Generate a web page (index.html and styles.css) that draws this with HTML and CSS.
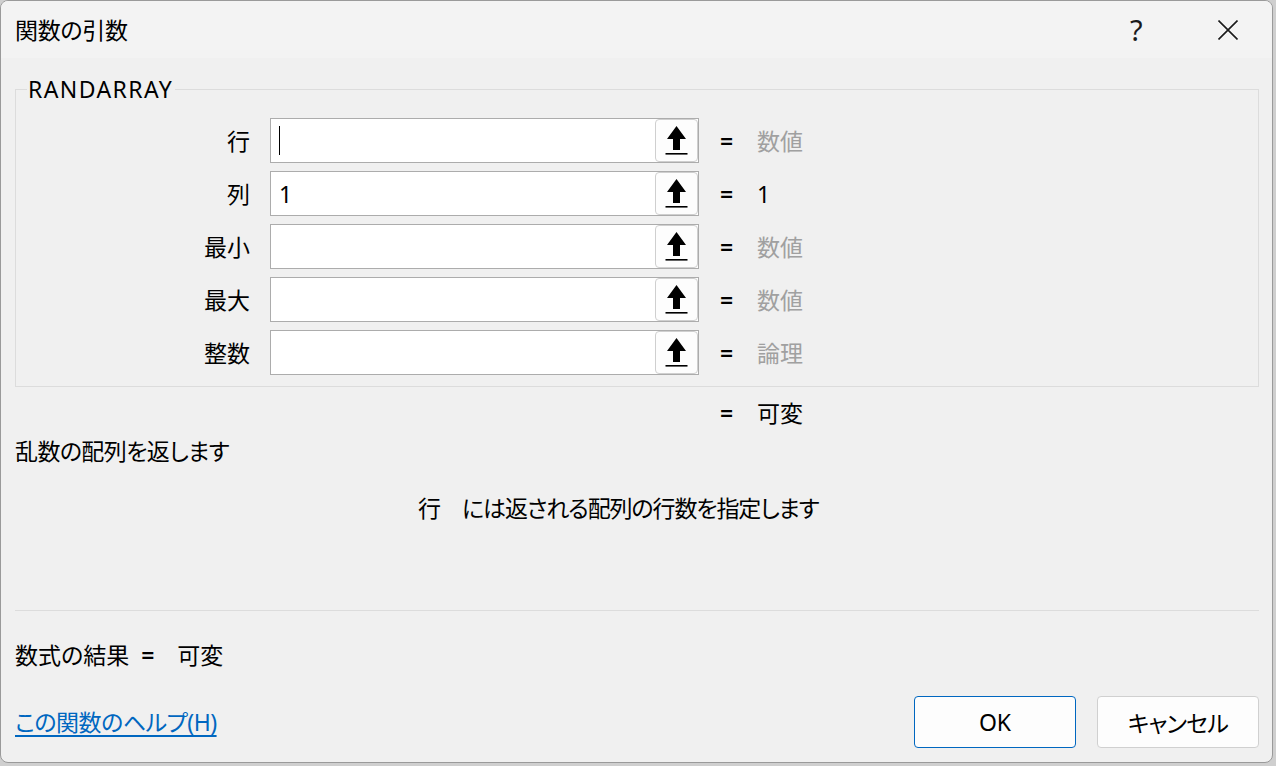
FILE: index.html
```html
<!DOCTYPE html>
<html lang="ja">
<head>
<meta charset="utf-8">
<link rel="stylesheet" href="styles.css">
</head>
<body>
<div class="dialog">
  <div class="titlebar">
    <div class="title">関数の引数</div>
    <div class="tb-actions">
      <span class="help">?</span>
      <svg class="close" width="20" height="20" viewBox="0 0 20 20"><path d="M0.5 0.5 L19.5 19.5 M19.5 0.5 L0.5 19.5" stroke="#1a1a1a" stroke-width="1.6" fill="none"/></svg>
    </div>
  </div>
  <div class="content">
    <fieldset class="group">
      <legend class="fn-name">RANDARRAY</legend>
      <div class="row">
        <div class="label">行</div>
        <div class="field"><div class="text"><span class="caret"></span></div><div class="pick"><svg width="41" height="41" viewBox="0 0 41 41"><path d="M20.5 6 L30 19 L24 19 L24 30 L17 30 L17 19 L11 19 Z" fill="#000"/><rect x="9.5" y="33" width="22" height="1.6" fill="#000"/></svg></div></div>
        <div class="eq">=</div>
        <div class="val hint">数値</div>
      </div>
      <div class="row">
        <div class="label">列</div>
        <div class="field"><div class="text">1</div><div class="pick"><svg width="41" height="41" viewBox="0 0 41 41"><path d="M20.5 6 L30 19 L24 19 L24 30 L17 30 L17 19 L11 19 Z" fill="#000"/><rect x="9.5" y="33" width="22" height="1.6" fill="#000"/></svg></div></div>
        <div class="eq">=</div>
        <div class="val">1</div>
      </div>
      <div class="row">
        <div class="label">最小</div>
        <div class="field"><div class="text"></div><div class="pick"><svg width="41" height="41" viewBox="0 0 41 41"><path d="M20.5 6 L30 19 L24 19 L24 30 L17 30 L17 19 L11 19 Z" fill="#000"/><rect x="9.5" y="33" width="22" height="1.6" fill="#000"/></svg></div></div>
        <div class="eq">=</div>
        <div class="val hint">数値</div>
      </div>
      <div class="row">
        <div class="label">最大</div>
        <div class="field"><div class="text"></div><div class="pick"><svg width="41" height="41" viewBox="0 0 41 41"><path d="M20.5 6 L30 19 L24 19 L24 30 L17 30 L17 19 L11 19 Z" fill="#000"/><rect x="9.5" y="33" width="22" height="1.6" fill="#000"/></svg></div></div>
        <div class="eq">=</div>
        <div class="val hint">数値</div>
      </div>
      <div class="row">
        <div class="label">整数</div>
        <div class="field"><div class="text"></div><div class="pick"><svg width="41" height="41" viewBox="0 0 41 41"><path d="M20.5 6 L30 19 L24 19 L24 30 L17 30 L17 19 L11 19 Z" fill="#000"/><rect x="9.5" y="33" width="22" height="1.6" fill="#000"/></svg></div></div>
        <div class="eq">=</div>
        <div class="val hint">論理</div>
      </div>
    </fieldset>
    <div class="result-row">
      <div class="eq">=</div>
      <div class="val">可変</div>
    </div>
    <div class="desc">乱数の配列を返します</div>
    <div class="arg-help"><span class="arg-name">行</span><span class="arg-text">には返される配列の行数を指定します</span></div>
    <div class="sep"></div>
    <div class="formula"><span>数式の結果</span><span class="f-eq">=</span><span class="f-val">可変</span></div>
    <div class="footer">
      <a class="help-link" href="#">この関数のヘルプ(H)</a>
      <div class="buttons">
        <button class="btn primary">OK</button>
        <button class="btn cancel">キャンセル</button>
      </div>
    </div>
  </div>
</div>
</body>
</html>
```
FILE: styles.css
```css
html, body {
  margin: 0;
  padding: 0;
}
body {
  width: 1276px;
  height: 766px;
  background: #cfcfcf;
  font-family: "Noto Sans", "Noto Sans CJK JP", sans-serif;
  font-feature-settings: "palt";
  font-size: 23px;
  line-height: 28px;
  color: #000;
  overflow: hidden;
}
.dialog {
  width: 1271px;
  border: 1px solid #9a9a9a;
  border-radius: 8px;
  background: #f0f0f0;
  overflow: hidden;
}
.titlebar {
  height: 57px;
  background: #f3f3f3;
  display: flex;
  align-items: center;
  justify-content: space-between;
  padding-left: 14px;
}
.title {
  font-size: 23px;
  letter-spacing: -0.3px;
}
.tb-actions {
  display: flex;
  align-items: center;
}
.help {
  font-size: 29px;
  width: 16px;
  margin-right: 72px;
  color: #1a1a1a;
}
.close {
  margin-right: 34px;
}
.content {
  padding: 0 13px 14px 14px;
}
.group {
  margin: 17px 0 0 0;
  padding: 0 0 11px 0;
  border: 1px solid #dcdcdc;
  min-width: 0;
}
.fn-name {
  margin-left: 11px;
  padding: 0 2px 0 1px;
  line-height: 28px;
  letter-spacing: 1.4px;
}
.row {
  display: flex;
  align-items: center;
  height: 45px;
  margin-top: 8px;
}
.row:first-of-type {
  margin-top: 15px;
}
.label {
  width: 234px;
  text-align: right;
  margin-right: 20px;
}
.field {
  width: 429px;
  height: 45px;
  box-sizing: border-box;
  border: 1px solid #acacac;
  background: #fff;
  display: flex;
}
.text {
  flex: 1;
  padding-left: 8px;
  display: flex;
  align-items: center;
}
.caret {
  display: block;
  width: 1px;
  height: 29px;
  background: #000;
}
.pick {
  width: 43px;
  height: 43px;
  box-sizing: border-box;
  border: 1px solid #cfcfcf;
  border-radius: 4px;
  background: #fdfdfd;
  display: flex;
  align-items: center;
  justify-content: center;
}
.pick svg {
  display: block;
}
.eq {
  margin-left: 21px;
  width: 37px;
  font-weight: 600;
}
.val {
  white-space: nowrap;
}
.hint {
  color: #a0a0a0;
}
.result-row {
  display: flex;
  margin-top: 12px;
  padding-left: 705px;
}
.result-row .eq {
  margin-left: 0;
}
.desc {
  margin-top: 10px;
  letter-spacing: -0.6px;
}
.arg-help {
  margin-top: 29px;
  padding-left: 403px;
}
.arg-text {
  margin-left: 21px;
  letter-spacing: -1.1px;
}
.sep {
  margin-top: 88px;
  height: 1px;
  background: #dcdcdc;
}
.formula {
  margin-top: 30px;
}
.f-eq {
  margin-left: 12px;
  font-weight: 600;
}
.f-val {
  margin-left: 23px;
}
.footer {
  margin-top: 27px;
  display: flex;
  align-items: center;
  justify-content: space-between;
  height: 52px;
}
.help-link {
  color: #0067c0;
  text-decoration: underline;
  text-underline-offset: 4px;
  letter-spacing: -0.5px;
}
.buttons {
  display: flex;
  gap: 21px;
}
.btn {
  width: 162px;
  height: 52px;
  box-sizing: border-box;
  border: 1px solid #d0d0d0;
  border-radius: 4px;
  background: #fdfdfd;
  font-family: inherit;
  font-feature-settings: "palt";
  font-size: 23px;
  color: #000;
  padding: 0;
}
.btn.primary {
  border-color: #0067c0;
}
.btn.cancel {
  letter-spacing: -0.8px;
}
```
